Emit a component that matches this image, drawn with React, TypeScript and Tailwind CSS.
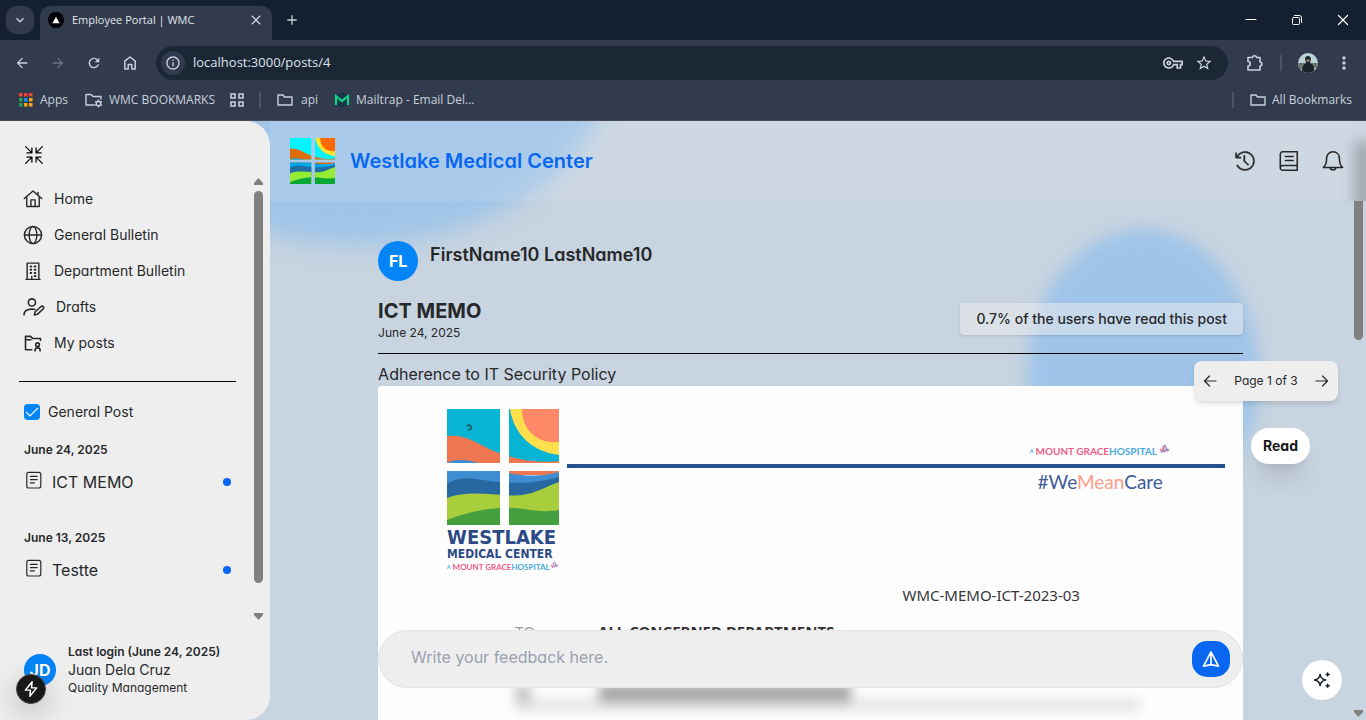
import type { ReactNode } from "react";
import {
  MdArrowBack,
  MdArrowForward,
  MdRefresh,
  MdInfoOutline,
  MdOutlineVpnKey,
  MdStarBorder,
  MdMoreVert,
  MdKeyboardArrowDown,
  MdClose,
  MdAdd,
} from "react-icons/md";
import { VscHistory } from "react-icons/vsc";

type IconProps = { className?: string; children: ReactNode; box?: string; width?: number };

function Line({ className = "size-5", children, box = "0 0 24 24", width = 1.7 }: IconProps) {
  return (
    <svg
      viewBox={box}
      className={className}
      fill="none"
      stroke="currentColor"
      strokeWidth={width}
      strokeLinecap="round"
      strokeLinejoin="round"
      aria-hidden="true"
    >
      {children}
    </svg>
  );
}

const HomeIcon = () => (
  <Line>
    <path d="M1.5 11.5 12 2.5l10.5 9M4.5 9.5V21h15V9.5M9.5 21v-8h5v8M18 7V4" />
  </Line>
);
const GlobeIcon = () => (
  <Line>
    <circle cx="12" cy="12" r="10.3" />
    <ellipse cx="12" cy="12" rx="4.6" ry="10.3" />
    <path d="M1.7 12h20.6" />
  </Line>
);
const BuildingIcon = () => (
  <Line>
    <path d="M5 22V2.5h14V22M3.5 22h17M10.5 22v-3.5" />
    <path d="M9 6.5h.9M14 6.5h.9M9 10.5h.9M14 10.5h.9M9 14.5h.9M14 14.5h.9M14 18h.9" strokeWidth={2.4} />
  </Line>
);
const DraftIcon = () => (
  <Line className="h-5 w-[22px]" box="0 0 26 24" width={1.9}>
    <circle cx="10.5" cy="6.5" r="4.3" />
    <path d="M1 21.5c0-4.7 4-7 9.500-7 1.500 0 2.500.2 3.500.5" />
    <path d="m13.500 21.500.7-3.500 7.300-6.600c1.700-1.200 4 .8 2.700 2.700L17 20.800l-3.500.7Z" />
  </Line>
);
const FolderUserIcon = () => (
  <Line width={1.9}>
    <path d="M10.500 20H3V4h6l2.500 2.500H21V9M3 8h6.500" />
    <circle cx="17.500" cy="14" r="2.200" />
    <path d="M14.500 21.500v-1c0-3.500 6-3.500 6 0v1" />
  </Line>
);
const CollapseIcon = () => (
  <Line width={1.5}>
    <path d="m2 2 7.500 7.500M3.500 9.500h6v-6M22 2l-7.500 7.500M20.500 9.500h-6v-6M2 22l7.500-7.500M3.500 14.500h6v6M22 22l-7.500-7.500M20.500 14.500h-6v6" />
  </Line>
);
const PostIcon = () => (
  <Line className="h-[18px] w-4" box="0 0 20 22" width={1.5}>
    <rect x="1" y="1.500" width="17.500" height="19.500" rx="2.500" />
    <path d="M5.500 6.500h8.500M5.500 10.500h8.500M5.500 14.500h5" />
  </Line>
);
const BookIcon = () => (
  <Line className="size-[22px]" width={1.7}>
    <path d="M21 22H5a2.500 2.500 0 0 1-2.500-2.500V4.500A2.500 2.500 0 0 1 5 2h16v20ZM2.500 19.500A2.500 2.500 0 0 1 5 17h16M8 7h8.500M8 11.500h8.500" />
  </Line>
);
const BellIcon = () => (
  <Line className="size-[22px]" width={1.7}>
    <path d="M12 2c-4.300 0-7 3-7 7.500 0 5-1 7.500-3.500 9.500h21C20 17 19 14.500 19 9.500 19 5 16.300 2 12 2ZM9 19.500c.3 3 5.700 3 6 0" />
  </Line>
);

function WindowLogo({ bright }: { bright?: boolean }) {
  const c = bright
    ? ["#00f6ff", "#e06c0c", "#ffe52e", "#ff6a00", "#00a8ee", "#1f6ea6", "#96ec34", "#08a834"]
    : ["#07b4d4", "#ee7650", "#ffdf4c", "#ff8868", "#3e8dd3", "#2768a0", "#a8ce3c", "#459f3e"];
  const id = bright ? "panes-bright" : "panes-scan";
  return (
    <svg
      viewBox="0 0 112 116"
      preserveAspectRatio="none"
      className={bright ? "relative h-[46px] w-[45px]" : "h-[116px] w-28"}
      aria-hidden="true"
    >
      <clipPath id={id}>
        <path d="M0 0h53v54H0zM62 0h50v54H62zM0 62h53v54H0zM62 62h50v54H62z" />
      </clipPath>
      <g clipPath={`url(#${id})`}>
        <path fill={c[0]} d="M0 0h112v58H0z" />
        <path fill={c[1]} d="M0 27c22-2 32 10 52 17 22 8 42 10 60 8v14H0z" />
        <path fill={c[2]} d="M63 0c4 26 23 43 49 46V0z" />
        <path fill={c[3]} d="M75 0c0 22 16 35 37 33V0z" />
        <path fill={c[4]} d="M0 54c6-4 22-4 34 1 22 11 54 15 78 8v20H0z" />
        <path fill={c[5]} d="M0 75c16-11 34-3 53-2 20 2 42 0 59-5v28H0z" />
        <path fill={c[6]} d="M0 89c18-7 38-4 56-3 27 3 36-6 56-13v43H0z" />
        <path fill={c[7]} d="M0 111c18-7 35-11 53-12 22-2 36 6 59 2v15H0z" />
      </g>
      {!bright && <path d="M20 17c2-2 5 0 4 3l-3 1" fill="none" stroke="#24505e" strokeWidth="1.500" />}
    </svg>
  );
}

function HospitalMark({ small }: { small?: boolean }) {
  return (
    <p
      className={
        small
          ? "flex items-center font-[Lato,sans-serif] text-[8px] leading-[10px] font-bold whitespace-nowrap"
          : "flex items-center font-[Lato,sans-serif] text-[10px] leading-4 font-bold whitespace-nowrap"
      }
    >
      <span className="mr-0.5 text-[5px] text-[#3ba9d8]">A</span>
      <span className="text-[#ec5d87]">MOUNT GRACE</span>
      <span className="text-[#45a9d9]">HOSPITAL</span>
      <svg viewBox="0 0 12 12" className={small ? "mb-1 size-2" : "mb-1 ml-0.5 size-2.5"} fill="none" strokeWidth="1.300" aria-hidden="true">
        <path stroke="#e36f98" d="M1 8c3 2 6-2 5-6-2 1-2 5 2 8M1 6l4 2M8 8c2 1 4 0 3-2" />
        <path stroke="#6d7fc0" d="M7 1c2 2 1 5 4 7M3 10c2 0 3-3 7-4" />
      </svg>
    </p>
  );
}

function Chrome() {
  return (
    <div className="shrink-0 border-b border-[#4b4b54] bg-[#313b4d] font-['Open_Sans',sans-serif] text-xs text-[#c9d0dc]">
      <div className="bg-[#14202f]">
        <div className="flex h-10 items-end">
          <button aria-label="Search tabs" className="mb-1.5 ml-1.5 flex size-7 items-center justify-center rounded-[10px] bg-[#313b4d]">
            <MdKeyboardArrowDown className="size-4" />
          </button>
          <div className="ml-1.5 flex h-[34px] w-[232px] items-center rounded-t-[10px] bg-[#313b4d] px-2 pb-1.5">
            <span className="flex size-4 items-center justify-center rounded-full bg-black">
              <svg viewBox="0 0 10 10" className="size-2" aria-hidden="true"><path fill="#fff" d="M5 1 9.500 9h-9z" /></svg>
            </span>
            <span className="ml-2 flex-1 text-[11px] text-[#e2e6ed]">Employee Portal | WMC</span>
            <button aria-label="Close tab"><MdClose className="size-4" /></button>
          </div>
          <button aria-label="New tab" className="mb-3 ml-3"><MdAdd className="size-4" /></button>
          <div className="mb-3 ml-auto flex items-center gap-[30px] pr-[15px] text-white">
            <button aria-label="Minimize"><Line className="size-4" box="0 0 16 16" width={1}><path d="M3 7.500h10" /></Line></button>
            <button aria-label="Restore"><Line className="size-4" box="0 0 16 16" width={1}><rect x="3.500" y="5.500" width="7" height="7" rx="1" /><path d="M5.500 3.500h5a2 2 0 0 1 2 2v5" /></Line></button>
            <button aria-label="Close"><Line className="size-4" box="0 0 16 16" width={1.2}><path d="m3.500 3.500 9 9m0-9-9 9" /></Line></button>
          </div>
        </div>
      </div>
      <div className="flex h-[46px] items-center pl-3.5">
        <div className="flex w-[142px] items-center gap-5">
          <button aria-label="Back"><MdArrowBack className="size-4" /></button>
          <button aria-label="Forward"><MdArrowForward className="size-4 text-[#6b7484]" /></button>
          <button aria-label="Reload"><MdRefresh className="size-4" /></button>
          <button aria-label="Home page">
            <Line className="size-4" box="0 0 16 16" width={1.5}><path d="M2.800 6.200 8 2l5.200 4.200V14H9.800V9.500H6.200V14H2.800Z" /></Line>
          </button>
        </div>
        <div className="flex h-[34px] flex-1 items-center rounded-full bg-[#1c2736] pr-[15px] pl-[5px]">
          <span className="flex size-6 items-center justify-center rounded-full bg-[#313b4d]"><MdInfoOutline className="size-4" /></span>
          <input
            aria-label="Address"
            defaultValue="localhost:3000/posts/4"
            className="ml-2 min-w-0 flex-1 bg-transparent text-[13px] text-[#dde2ea] outline-none"
          />
          <MdOutlineVpnKey className="size-5" />
          <MdStarBorder className="ml-3 size-[18px]" />
        </div>
        <button aria-label="Extensions" className="ml-[18px]">
          <Line className="size-[18px]" box="0 0 18 18" width={1.6}>
            <path d="M2 3.500h4.500a2 1.800 0 0 1 4 0H14V8a1.800 2 0 0 1 0 4v4H2v-4a2.200 2.200 0 0 0 0-4.500Z" />
          </Line>
        </button>
        <span className="ml-4 h-4 w-0.5 bg-[#4a5569]" />
        <button aria-label="Profile" className="ml-4">
          <svg viewBox="0 0 20 20" className="size-5 rounded-full" aria-hidden="true">
            <path fill="#b9d3d6" d="M0 0h20v20H0z" />
            <path fill="#66766c" d="M0 10h7v6H0zM13 10h7v5h-7z" />
            <path fill="#1c242a" d="M4 20c0-7 2-9 4-10l-1-4c0-4 6-4 6 0l-1 4c3 1 5 4 4 10z" />
            <path fill="#b78d76" d="M8.500 6.500h3V8.500h-3z" />
          </svg>
        </button>
        <button aria-label="Browser menu" className="mr-3 ml-4"><MdMoreVert className="size-5" /></button>
      </div>
      <div className="flex h-[34px] items-center pr-3.5 pb-1.5 pl-[19px]">
        <svg viewBox="0 0 14 14" className="size-3.5" aria-hidden="true">
          <path fill="#f44336" d="M0 0h3.500v3.500H0zM5 0h3.500v3.500H5zM10 0h3.500v3.500H10z" />
          <path fill="#24a35a" d="M0 5h3.500v3.500H0zM0 10h3.500v3.500H0z" />
          <path fill="#2090f4" d="M5 5h3.500v3.500H5z" />
          <path fill="#ffa50c" d="M10 5h3.500v3.500H10zM5 10h3.500v3.500H5zM10 10h3.500v3.500H10z" />
        </svg>
        <a href="#apps" className="ml-[7px]">Apps</a>
        <a href="#wmc" className="ml-[17px] flex items-center gap-1.5">
          <Line className="h-4 w-[18px]" box="0 0 18 16" width={1.4}>
            <path d="M9 13H1V2.500h5l2 2h8V7" /><circle cx="13.500" cy="11.500" r="2.200" />
            <path d="M13.500 8v1M13.500 14v1M10.500 9.800l.8.4M15.700 12.800l.8.4M16.500 9.800l-.8.4M11.300 12.800l-.8.4" />
          </Line>
          WMC BOOKMARKS
        </a>
        <svg viewBox="0 0 14 14" className="ml-[15px] size-3.5" fill="none" stroke="currentColor" strokeWidth="1.600" aria-hidden="true">
          <path d="M1 1h4v4H1zM9 1h4v4H9zM1 9h4v4H1zM9 9h4v4H9z" />
        </svg>
        <span className="ml-[15px] h-4 w-0.5 bg-[#4a5569]" />
        <a href="#api" className="ml-4 flex items-center gap-2"><FolderOutline />api</a>
        <a href="#mailtrap" className="ml-4 flex items-center gap-1.5">
          <svg viewBox="0 0 16 16" className="size-4" aria-hidden="true">
            <path fill="#17384b" d="m8 0 6 4v8l-6 4-6-4V4z" />
            <path fill="none" stroke="#16cf84" strokeWidth="2.200" d="M2 13V4l6 5 6-5v9" />
          </svg>
          Mailtrap - Email Del...
        </a>
        <span className="ml-auto h-4 w-0.5 bg-[#4a5569]" />
        <a href="#all" className="ml-4 flex items-center gap-1.5"><FolderOutline />All Bookmarks</a>
      </div>
    </div>
  );
}

const FolderOutline = () => (
  <Line className="size-4" box="0 0 16 16" width={1.4}><path d="M1 13V3h5l1.500 2H15v8Z" /></Line>
);

function Scrollbar({ thumb, top }: { thumb: string; top?: boolean }) {
  return (
    <div className="flex w-[9px] shrink-0 flex-col items-center text-[#808080]" aria-hidden="true">
      {top && <svg viewBox="0 0 9 7" className="mt-px mb-1.5 h-[7px] w-[9px] shrink-0"><path fill="currentColor" d="M4.500 0 9 5v2H0V5z" /></svg>}
      <span className={thumb} />
      <svg viewBox="0 0 9 7" className="mt-auto h-[7px] w-[9px] shrink-0"><path fill="currentColor" d="M4.500 7 9 2V0H0v2z" /></svg>
    </div>
  );
}

const links = [
  { label: "Home", icon: <HomeIcon /> },
  { label: "General Bulletin", icon: <GlobeIcon /> },
  { label: "Department Bulletin", icon: <BuildingIcon /> },
  { label: "Drafts", icon: <DraftIcon /> },
  { label: "My posts", icon: <FolderUserIcon /> },
];
const groups = [
  { date: "June 24, 2025", title: "ICT MEMO" },
  { date: "June 13, 2025", title: "Testte" },
];

function Sidebar() {
  return (
    <aside className="relative z-10 flex w-[270px] shrink-0 flex-col rounded-r-3xl bg-[#eeeeee] pt-6">
      <button aria-label="Collapse sidebar" className="ml-6 size-5 text-black"><CollapseIcon /></button>
      <div className="mt-3 flex min-h-0 flex-1 pr-[7px]">
        <div className="flex-1 overflow-hidden pr-[18px] pl-[19px]">
          <nav className="mt-1 pl-1">
            {links.map((l) => (
              <a key={l.label} href="#nav" className="flex h-9 items-center gap-[11px] text-sm">
                {l.icon}
                {l.label}
              </a>
            ))}
          </nav>
          <hr className="mt-5 border-black" />
          <label className="mt-5 mb-5 flex items-center gap-2 pl-[5px] text-sm">
            <span className="relative flex size-4">
              <input type="checkbox" defaultChecked className="size-4 appearance-none rounded bg-white checked:bg-[#0485f7]" />
              <svg viewBox="0 0 16 16" className="pointer-events-none absolute inset-0 size-4" fill="none" stroke="#fff" strokeWidth="1.100" aria-hidden="true">
                <path d="m2 8 4 4L14 4" />
              </svg>
            </span>
            General Post
          </label>
          {groups.map((g) => (
            <section key={g.date} className="mb-9 pl-[5px]">
              <h3 className="text-xs font-semibold">{g.date}</h3>
              <a href="#post" className="mt-3 flex items-center gap-2.5 pr-1">
                <span className="mb-1 ml-0.5"><PostIcon /></span>
                <span className="flex-1 text-base">{g.title}</span>
                <span className="mr-px size-2 rounded-full bg-[#0866f0]" />
              </a>
            </section>
          ))}
        </div>
        <Scrollbar top thumb="h-[392px] w-[9px] rounded-full bg-[#808080]" />
      </div>
      <div className="mt-6 flex gap-3 pb-6 pl-6">
        <div className="relative mt-2.5">
          <div className="flex size-8 items-center justify-center rounded-full bg-[#0485f7] text-base font-bold text-white">JD</div>
          <button aria-label="Developer tools" className="absolute top-5 -left-2 flex size-[30px] items-center justify-center rounded-full border border-[#444] bg-[#19191a] text-white shadow-[0_8px_28px_rgba(0,0,0,0.25)]">
            <Line className="size-[18px]" box="0 0 16 16" width={1.3}><path d="M9 1.500 3 9h4.500L7 14.500 13 7H8.500Z" /></Line>
          </button>
        </div>
        <div>
          <p className="text-xs font-semibold">Last login (June 24, 2025)</p>
          <p className="text-sm">Juan Dela Cruz</p>
          <p className="text-xs">Quality Management</p>
        </div>
      </div>
    </aside>
  );
}

function Memo() {
  return (
    <article className="relative h-[420px] rounded-tl bg-[#fefefe] pt-[23px]">
      <div className="flex pr-[18px] pl-[69px]">
        <div className="w-28 shrink-0 font-['DejaVu_Sans_Condensed','DejaVu_Sans',sans-serif] font-bold whitespace-nowrap text-[#2b4a86]">
          <WindowLogo />
          <p className="mt-0.5 text-[20px] leading-5">WESTLAKE</p>
          <p className="text-xs leading-[14px]">MEDICAL CENTER</p>
          <HospitalMark small />
        </div>
        <div className="ml-2 flex-1 pt-[34px]">
          <div className="flex justify-end pr-14"><HospitalMark /></div>
          <div className="mt-[5px] h-1 bg-[#29508e]" />
          <p className="mt-0.5 pr-[62px] text-right font-[Lato,sans-serif] text-[19px] leading-6 text-[#3e5c98]">
            #We<span className="text-[#ff9d86]">Mean</span>Care
          </p>
        </div>
      </div>
      <p className="mt-3 pr-[163px] text-right font-['Noto_Sans',sans-serif] text-[15px] leading-5 text-[#36363a]">
        WMC-MEMO-ICT-2023-03
      </p>
      <div className="mt-4 flex pl-[137px] font-['Noto_Sans',sans-serif] text-[15px] leading-5 font-bold text-[#333]">
        <span className="w-[83px] font-normal text-[#99a]">TO</span>
        <span>ALL CONCERNED DEPARTMENTS</span>
      </div>
      <div className="mt-11 mr-[103px] ml-[137px] blur-[6px]" aria-hidden="true">
        <div className="flex">
          <span className="h-5 w-4 bg-[#c0c0c0]" />
          <span className="ml-[68px] h-5 w-[252px] bg-[#a0a0a0]" />
        </div>
        <div className="-mt-1.5 h-3 bg-[#d8d8d8] opacity-70" />
      </div>
    </article>
  );
}

export default function App() {
  return (
    <div className="flex h-screen flex-col overflow-hidden">
      <Chrome />
      <div className="relative flex min-h-0 flex-1 overflow-hidden bg-[#c8d4e0] font-[Inter,sans-serif] text-[#27282a] [font-feature-settings:'cv11']">
        <div className="absolute -top-[248px] left-[100px] h-[372px] w-[510px] rounded-[50%] bg-[#9fc4e8] blur-md" />
        <div className="absolute top-[108px] right-[107px] h-[290px] w-[232px] rounded-[50%] bg-[#9fc4e8] blur-[8px]" />
        <Sidebar />
        <main className="relative flex min-w-0 flex-1 flex-col">
          <header className="relative flex h-20 shrink-0 items-center overflow-hidden bg-white/10 pr-[22px] pl-5">
            <div className="absolute top-5 -right-2 h-24 w-5 bg-[#8d9298] opacity-70 blur-[7px]" />
            <WindowLogo bright />
            <h1 className="relative ml-[15px] flex-1 text-xl font-semibold text-[#0868f2]">Westlake Medical Center</h1>
            <div className="relative flex items-center gap-[22px]">
              <button aria-label="History"><VscHistory className="size-[22px] stroke-[0.3]" /></button>
              <button aria-label="Notes"><BookIcon /></button>
              <button aria-label="Notifications"><BellIcon /></button>
            </div>
          </header>
          <div className="flex min-h-0 flex-1 pr-[3px]">
            <div className="relative mr-[3px] min-w-0 flex-1">
              <div className="h-full overflow-hidden px-[10%] pt-10">
                <div className="flex gap-3">
                  <span className="flex size-10 items-center justify-center rounded-full bg-[#0485f7] text-base font-bold text-white">FL</span>
                  <h2 className="text-lg font-semibold">FirstName10 LastName10</h2>
                </div>
                <div className="mt-4 flex items-center justify-between">
                  <div>
                    <h2 className="text-xl leading-7 font-bold">ICT MEMO</h2>
                    <p className="text-xs">June 24, 2025</p>
                  </div>
                  <p className="rounded bg-[#eeeeee]/50 px-4 py-1.5 text-sm font-medium shadow-sm">0.7% of the users have read this post</p>
                </div>
                <hr className="mt-3 mb-2 border-black" />
                <p className="text-base">Adherence to IT Security Policy</p>
                <Memo />
              </div>
              <div className="absolute top-40 right-[13px] flex h-10 w-36 items-center justify-between rounded-lg bg-[#eeeeee] px-2 text-xs shadow-md">
                <button aria-label="Previous page"><Line className="size-4" box="0 0 16 16" width={1.2}><path d="M14 8H2.500M7.500 3l-5 5 5 5" /></Line></button>
                Page 1 of 3
                <button aria-label="Next page"><Line className="size-4" box="0 0 16 16" width={1.2}><path d="M2 8h11.500M8.500 3l5 5-5 5" /></Line></button>
              </div>
              <button className="absolute top-[227px] right-[41px] h-9 rounded-full bg-white px-3 text-sm font-bold text-[#18191b] shadow-xl">Read</button>
              <form className="absolute right-[10%] bottom-8 left-[10%] flex h-[58px] items-center rounded-[30px] border border-[#e3e4e8] bg-[#eeeeee] pr-3 pl-8">
                <input aria-label="Feedback" placeholder="Write your feedback here." className="min-w-0 flex-1 bg-transparent pb-1 text-base outline-none placeholder:text-[#99a1af]" />
                <button type="button" aria-label="Send feedback" className="flex h-9 w-[38px] items-center justify-center rounded-[15px] bg-[#0866f0] text-white">
                  <Line className="size-[18px]" width={2.2}><path d="M12 2.500 22 21.500 12 19.500 2 21.500ZM12 3v16.500" /></Line>
                </button>
              </form>
              <button aria-label="Assistant" className="absolute right-[9px] bottom-5 flex size-10 items-center justify-center rounded-full bg-white text-[#15202b]">
                <Line className="size-[18px]" width={2}><path d="M9.500 4.500c.8 5 2.500 6.700 7.500 7.500-5 .8-6.700 2.500-7.500 7.500C8.700 14.500 7 12.800 2 12c5-.8 6.700-2.500 7.500-7.500ZM19.500 2.500v4M17.500 4.500h4M19.500 17.500v4M17.500 19.500h4" /></Line>
              </button>
            </div>
            <div className="flex pb-[3px]">
              <Scrollbar thumb="h-[139px] w-[9px] rounded-b-full bg-[#808080]" />
            </div>
          </div>
        </main>
      </div>
    </div>
  );
}
